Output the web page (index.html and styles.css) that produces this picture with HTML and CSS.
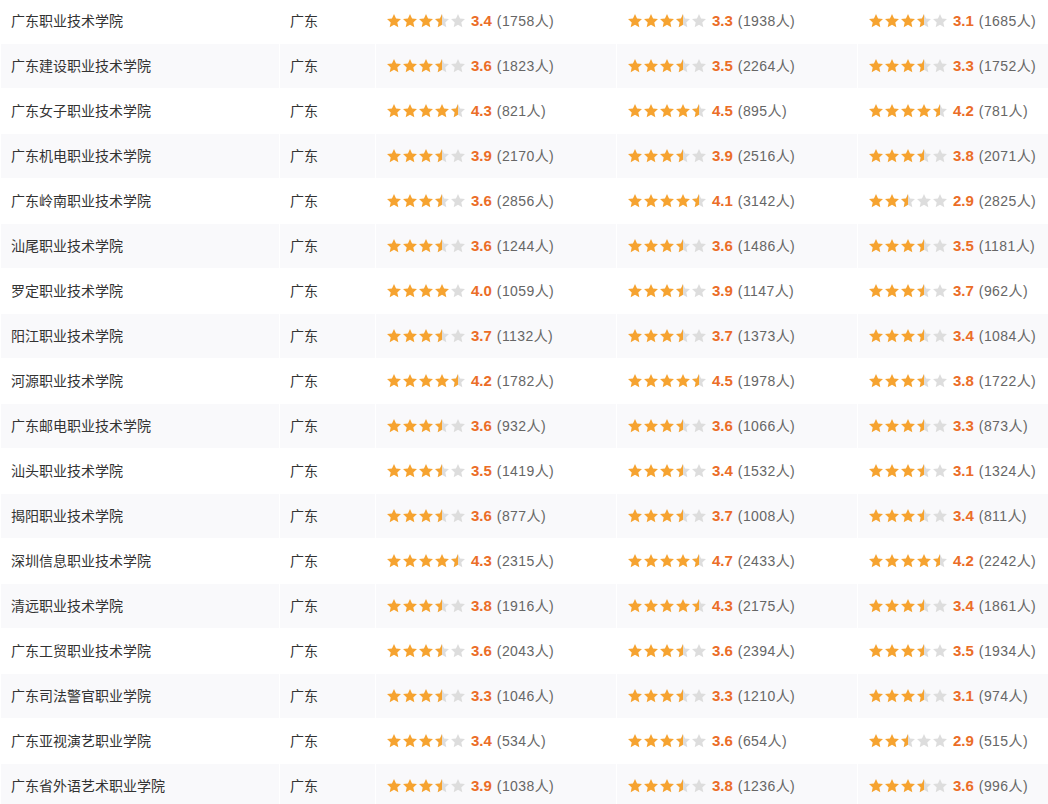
FILE: index.html
```html
<!DOCTYPE html>
<html lang="zh-CN">
<head>
<meta charset="utf-8">
<title>院校评分</title>
<link rel="stylesheet" href="styles.css">
</head>
<body>
<svg class="sprite" aria-hidden="true">
  <symbol id="full" viewBox="0 0 24 24">
    <path class="on" d="M12 1.5L15.06 8.29L22.46 9.1L16.95 14.11L18.47 21.4L12 17.7L5.53 21.4L7.05 14.11L1.54 9.1L8.94 8.29Z"/>
  </symbol>
  <symbol id="half" viewBox="0 0 24 24">
    <path class="off" d="M12 1.5L15.06 8.29L22.46 9.1L16.95 14.11L18.47 21.4L12 17.7L5.53 21.4L7.05 14.11L1.54 9.1L8.94 8.29Z"/>
    <path class="on" d="M12 1.5L8.94 8.29L1.54 9.1L7.05 14.11L5.53 21.4L12 17.7Z"/>
  </symbol>
  <symbol id="empty" viewBox="0 0 24 24">
    <path class="off" d="M12 1.5L15.06 8.29L22.46 9.1L16.95 14.11L18.47 21.4L12 17.7L5.53 21.4L7.05 14.11L1.54 9.1L8.94 8.29Z"/>
  </symbol>
</svg>
<table class="rank">
  <colgroup>
    <col class="c-name"><col class="c-prov"><col class="c-rate"><col class="c-rate"><col class="c-rate">
  </colgroup>
  <tbody>
    <tr>
      <td>广东职业技术学院</td><td>广东</td>
      <td><div class="rate"><span class="stars"><svg><use href="#full"/></svg><svg><use href="#full"/></svg><svg><use href="#full"/></svg><svg><use href="#half"/></svg><svg><use href="#empty"/></svg></span><b>3.4</b><span class="cnt">(1758人)</span></div></td>
      <td><div class="rate"><span class="stars"><svg><use href="#full"/></svg><svg><use href="#full"/></svg><svg><use href="#full"/></svg><svg><use href="#half"/></svg><svg><use href="#empty"/></svg></span><b>3.3</b><span class="cnt">(1938人)</span></div></td>
      <td><div class="rate"><span class="stars"><svg><use href="#full"/></svg><svg><use href="#full"/></svg><svg><use href="#full"/></svg><svg><use href="#half"/></svg><svg><use href="#empty"/></svg></span><b>3.1</b><span class="cnt">(1685人)</span></div></td>
    </tr>
    <tr>
      <td>广东建设职业技术学院</td><td>广东</td>
      <td><div class="rate"><span class="stars"><svg><use href="#full"/></svg><svg><use href="#full"/></svg><svg><use href="#full"/></svg><svg><use href="#half"/></svg><svg><use href="#empty"/></svg></span><b>3.6</b><span class="cnt">(1823人)</span></div></td>
      <td><div class="rate"><span class="stars"><svg><use href="#full"/></svg><svg><use href="#full"/></svg><svg><use href="#full"/></svg><svg><use href="#half"/></svg><svg><use href="#empty"/></svg></span><b>3.5</b><span class="cnt">(2264人)</span></div></td>
      <td><div class="rate"><span class="stars"><svg><use href="#full"/></svg><svg><use href="#full"/></svg><svg><use href="#full"/></svg><svg><use href="#half"/></svg><svg><use href="#empty"/></svg></span><b>3.3</b><span class="cnt">(1752人)</span></div></td>
    </tr>
    <tr>
      <td>广东女子职业技术学院</td><td>广东</td>
      <td><div class="rate"><span class="stars"><svg><use href="#full"/></svg><svg><use href="#full"/></svg><svg><use href="#full"/></svg><svg><use href="#full"/></svg><svg><use href="#half"/></svg></span><b>4.3</b><span class="cnt">(821人)</span></div></td>
      <td><div class="rate"><span class="stars"><svg><use href="#full"/></svg><svg><use href="#full"/></svg><svg><use href="#full"/></svg><svg><use href="#full"/></svg><svg><use href="#half"/></svg></span><b>4.5</b><span class="cnt">(895人)</span></div></td>
      <td><div class="rate"><span class="stars"><svg><use href="#full"/></svg><svg><use href="#full"/></svg><svg><use href="#full"/></svg><svg><use href="#full"/></svg><svg><use href="#half"/></svg></span><b>4.2</b><span class="cnt">(781人)</span></div></td>
    </tr>
    <tr>
      <td>广东机电职业技术学院</td><td>广东</td>
      <td><div class="rate"><span class="stars"><svg><use href="#full"/></svg><svg><use href="#full"/></svg><svg><use href="#full"/></svg><svg><use href="#half"/></svg><svg><use href="#empty"/></svg></span><b>3.9</b><span class="cnt">(2170人)</span></div></td>
      <td><div class="rate"><span class="stars"><svg><use href="#full"/></svg><svg><use href="#full"/></svg><svg><use href="#full"/></svg><svg><use href="#half"/></svg><svg><use href="#empty"/></svg></span><b>3.9</b><span class="cnt">(2516人)</span></div></td>
      <td><div class="rate"><span class="stars"><svg><use href="#full"/></svg><svg><use href="#full"/></svg><svg><use href="#full"/></svg><svg><use href="#half"/></svg><svg><use href="#empty"/></svg></span><b>3.8</b><span class="cnt">(2071人)</span></div></td>
    </tr>
    <tr>
      <td>广东岭南职业技术学院</td><td>广东</td>
      <td><div class="rate"><span class="stars"><svg><use href="#full"/></svg><svg><use href="#full"/></svg><svg><use href="#full"/></svg><svg><use href="#half"/></svg><svg><use href="#empty"/></svg></span><b>3.6</b><span class="cnt">(2856人)</span></div></td>
      <td><div class="rate"><span class="stars"><svg><use href="#full"/></svg><svg><use href="#full"/></svg><svg><use href="#full"/></svg><svg><use href="#full"/></svg><svg><use href="#half"/></svg></span><b>4.1</b><span class="cnt">(3142人)</span></div></td>
      <td><div class="rate"><span class="stars"><svg><use href="#full"/></svg><svg><use href="#full"/></svg><svg><use href="#half"/></svg><svg><use href="#empty"/></svg><svg><use href="#empty"/></svg></span><b>2.9</b><span class="cnt">(2825人)</span></div></td>
    </tr>
    <tr>
      <td>汕尾职业技术学院</td><td>广东</td>
      <td><div class="rate"><span class="stars"><svg><use href="#full"/></svg><svg><use href="#full"/></svg><svg><use href="#full"/></svg><svg><use href="#half"/></svg><svg><use href="#empty"/></svg></span><b>3.6</b><span class="cnt">(1244人)</span></div></td>
      <td><div class="rate"><span class="stars"><svg><use href="#full"/></svg><svg><use href="#full"/></svg><svg><use href="#full"/></svg><svg><use href="#half"/></svg><svg><use href="#empty"/></svg></span><b>3.6</b><span class="cnt">(1486人)</span></div></td>
      <td><div class="rate"><span class="stars"><svg><use href="#full"/></svg><svg><use href="#full"/></svg><svg><use href="#full"/></svg><svg><use href="#half"/></svg><svg><use href="#empty"/></svg></span><b>3.5</b><span class="cnt">(1181人)</span></div></td>
    </tr>
    <tr>
      <td>罗定职业技术学院</td><td>广东</td>
      <td><div class="rate"><span class="stars"><svg><use href="#full"/></svg><svg><use href="#full"/></svg><svg><use href="#full"/></svg><svg><use href="#full"/></svg><svg><use href="#empty"/></svg></span><b>4.0</b><span class="cnt">(1059人)</span></div></td>
      <td><div class="rate"><span class="stars"><svg><use href="#full"/></svg><svg><use href="#full"/></svg><svg><use href="#full"/></svg><svg><use href="#half"/></svg><svg><use href="#empty"/></svg></span><b>3.9</b><span class="cnt">(1147人)</span></div></td>
      <td><div class="rate"><span class="stars"><svg><use href="#full"/></svg><svg><use href="#full"/></svg><svg><use href="#full"/></svg><svg><use href="#half"/></svg><svg><use href="#empty"/></svg></span><b>3.7</b><span class="cnt">(962人)</span></div></td>
    </tr>
    <tr>
      <td>阳江职业技术学院</td><td>广东</td>
      <td><div class="rate"><span class="stars"><svg><use href="#full"/></svg><svg><use href="#full"/></svg><svg><use href="#full"/></svg><svg><use href="#half"/></svg><svg><use href="#empty"/></svg></span><b>3.7</b><span class="cnt">(1132人)</span></div></td>
      <td><div class="rate"><span class="stars"><svg><use href="#full"/></svg><svg><use href="#full"/></svg><svg><use href="#full"/></svg><svg><use href="#half"/></svg><svg><use href="#empty"/></svg></span><b>3.7</b><span class="cnt">(1373人)</span></div></td>
      <td><div class="rate"><span class="stars"><svg><use href="#full"/></svg><svg><use href="#full"/></svg><svg><use href="#full"/></svg><svg><use href="#half"/></svg><svg><use href="#empty"/></svg></span><b>3.4</b><span class="cnt">(1084人)</span></div></td>
    </tr>
    <tr>
      <td>河源职业技术学院</td><td>广东</td>
      <td><div class="rate"><span class="stars"><svg><use href="#full"/></svg><svg><use href="#full"/></svg><svg><use href="#full"/></svg><svg><use href="#full"/></svg><svg><use href="#half"/></svg></span><b>4.2</b><span class="cnt">(1782人)</span></div></td>
      <td><div class="rate"><span class="stars"><svg><use href="#full"/></svg><svg><use href="#full"/></svg><svg><use href="#full"/></svg><svg><use href="#full"/></svg><svg><use href="#half"/></svg></span><b>4.5</b><span class="cnt">(1978人)</span></div></td>
      <td><div class="rate"><span class="stars"><svg><use href="#full"/></svg><svg><use href="#full"/></svg><svg><use href="#full"/></svg><svg><use href="#half"/></svg><svg><use href="#empty"/></svg></span><b>3.8</b><span class="cnt">(1722人)</span></div></td>
    </tr>
    <tr>
      <td>广东邮电职业技术学院</td><td>广东</td>
      <td><div class="rate"><span class="stars"><svg><use href="#full"/></svg><svg><use href="#full"/></svg><svg><use href="#full"/></svg><svg><use href="#half"/></svg><svg><use href="#empty"/></svg></span><b>3.6</b><span class="cnt">(932人)</span></div></td>
      <td><div class="rate"><span class="stars"><svg><use href="#full"/></svg><svg><use href="#full"/></svg><svg><use href="#full"/></svg><svg><use href="#half"/></svg><svg><use href="#empty"/></svg></span><b>3.6</b><span class="cnt">(1066人)</span></div></td>
      <td><div class="rate"><span class="stars"><svg><use href="#full"/></svg><svg><use href="#full"/></svg><svg><use href="#full"/></svg><svg><use href="#half"/></svg><svg><use href="#empty"/></svg></span><b>3.3</b><span class="cnt">(873人)</span></div></td>
    </tr>
    <tr>
      <td>汕头职业技术学院</td><td>广东</td>
      <td><div class="rate"><span class="stars"><svg><use href="#full"/></svg><svg><use href="#full"/></svg><svg><use href="#full"/></svg><svg><use href="#half"/></svg><svg><use href="#empty"/></svg></span><b>3.5</b><span class="cnt">(1419人)</span></div></td>
      <td><div class="rate"><span class="stars"><svg><use href="#full"/></svg><svg><use href="#full"/></svg><svg><use href="#full"/></svg><svg><use href="#half"/></svg><svg><use href="#empty"/></svg></span><b>3.4</b><span class="cnt">(1532人)</span></div></td>
      <td><div class="rate"><span class="stars"><svg><use href="#full"/></svg><svg><use href="#full"/></svg><svg><use href="#full"/></svg><svg><use href="#half"/></svg><svg><use href="#empty"/></svg></span><b>3.1</b><span class="cnt">(1324人)</span></div></td>
    </tr>
    <tr>
      <td>揭阳职业技术学院</td><td>广东</td>
      <td><div class="rate"><span class="stars"><svg><use href="#full"/></svg><svg><use href="#full"/></svg><svg><use href="#full"/></svg><svg><use href="#half"/></svg><svg><use href="#empty"/></svg></span><b>3.6</b><span class="cnt">(877人)</span></div></td>
      <td><div class="rate"><span class="stars"><svg><use href="#full"/></svg><svg><use href="#full"/></svg><svg><use href="#full"/></svg><svg><use href="#half"/></svg><svg><use href="#empty"/></svg></span><b>3.7</b><span class="cnt">(1008人)</span></div></td>
      <td><div class="rate"><span class="stars"><svg><use href="#full"/></svg><svg><use href="#full"/></svg><svg><use href="#full"/></svg><svg><use href="#half"/></svg><svg><use href="#empty"/></svg></span><b>3.4</b><span class="cnt">(811人)</span></div></td>
    </tr>
    <tr>
      <td>深圳信息职业技术学院</td><td>广东</td>
      <td><div class="rate"><span class="stars"><svg><use href="#full"/></svg><svg><use href="#full"/></svg><svg><use href="#full"/></svg><svg><use href="#full"/></svg><svg><use href="#half"/></svg></span><b>4.3</b><span class="cnt">(2315人)</span></div></td>
      <td><div class="rate"><span class="stars"><svg><use href="#full"/></svg><svg><use href="#full"/></svg><svg><use href="#full"/></svg><svg><use href="#full"/></svg><svg><use href="#half"/></svg></span><b>4.7</b><span class="cnt">(2433人)</span></div></td>
      <td><div class="rate"><span class="stars"><svg><use href="#full"/></svg><svg><use href="#full"/></svg><svg><use href="#full"/></svg><svg><use href="#full"/></svg><svg><use href="#half"/></svg></span><b>4.2</b><span class="cnt">(2242人)</span></div></td>
    </tr>
    <tr>
      <td>清远职业技术学院</td><td>广东</td>
      <td><div class="rate"><span class="stars"><svg><use href="#full"/></svg><svg><use href="#full"/></svg><svg><use href="#full"/></svg><svg><use href="#half"/></svg><svg><use href="#empty"/></svg></span><b>3.8</b><span class="cnt">(1916人)</span></div></td>
      <td><div class="rate"><span class="stars"><svg><use href="#full"/></svg><svg><use href="#full"/></svg><svg><use href="#full"/></svg><svg><use href="#full"/></svg><svg><use href="#half"/></svg></span><b>4.3</b><span class="cnt">(2175人)</span></div></td>
      <td><div class="rate"><span class="stars"><svg><use href="#full"/></svg><svg><use href="#full"/></svg><svg><use href="#full"/></svg><svg><use href="#half"/></svg><svg><use href="#empty"/></svg></span><b>3.4</b><span class="cnt">(1861人)</span></div></td>
    </tr>
    <tr>
      <td>广东工贸职业技术学院</td><td>广东</td>
      <td><div class="rate"><span class="stars"><svg><use href="#full"/></svg><svg><use href="#full"/></svg><svg><use href="#full"/></svg><svg><use href="#half"/></svg><svg><use href="#empty"/></svg></span><b>3.6</b><span class="cnt">(2043人)</span></div></td>
      <td><div class="rate"><span class="stars"><svg><use href="#full"/></svg><svg><use href="#full"/></svg><svg><use href="#full"/></svg><svg><use href="#half"/></svg><svg><use href="#empty"/></svg></span><b>3.6</b><span class="cnt">(2394人)</span></div></td>
      <td><div class="rate"><span class="stars"><svg><use href="#full"/></svg><svg><use href="#full"/></svg><svg><use href="#full"/></svg><svg><use href="#half"/></svg><svg><use href="#empty"/></svg></span><b>3.5</b><span class="cnt">(1934人)</span></div></td>
    </tr>
    <tr>
      <td>广东司法警官职业学院</td><td>广东</td>
      <td><div class="rate"><span class="stars"><svg><use href="#full"/></svg><svg><use href="#full"/></svg><svg><use href="#full"/></svg><svg><use href="#half"/></svg><svg><use href="#empty"/></svg></span><b>3.3</b><span class="cnt">(1046人)</span></div></td>
      <td><div class="rate"><span class="stars"><svg><use href="#full"/></svg><svg><use href="#full"/></svg><svg><use href="#full"/></svg><svg><use href="#half"/></svg><svg><use href="#empty"/></svg></span><b>3.3</b><span class="cnt">(1210人)</span></div></td>
      <td><div class="rate"><span class="stars"><svg><use href="#full"/></svg><svg><use href="#full"/></svg><svg><use href="#full"/></svg><svg><use href="#half"/></svg><svg><use href="#empty"/></svg></span><b>3.1</b><span class="cnt">(974人)</span></div></td>
    </tr>
    <tr>
      <td>广东亚视演艺职业学院</td><td>广东</td>
      <td><div class="rate"><span class="stars"><svg><use href="#full"/></svg><svg><use href="#full"/></svg><svg><use href="#full"/></svg><svg><use href="#half"/></svg><svg><use href="#empty"/></svg></span><b>3.4</b><span class="cnt">(534人)</span></div></td>
      <td><div class="rate"><span class="stars"><svg><use href="#full"/></svg><svg><use href="#full"/></svg><svg><use href="#full"/></svg><svg><use href="#half"/></svg><svg><use href="#empty"/></svg></span><b>3.6</b><span class="cnt">(654人)</span></div></td>
      <td><div class="rate"><span class="stars"><svg><use href="#full"/></svg><svg><use href="#full"/></svg><svg><use href="#half"/></svg><svg><use href="#empty"/></svg><svg><use href="#empty"/></svg></span><b>2.9</b><span class="cnt">(515人)</span></div></td>
    </tr>
    <tr>
      <td>广东省外语艺术职业学院</td><td>广东</td>
      <td><div class="rate"><span class="stars"><svg><use href="#full"/></svg><svg><use href="#full"/></svg><svg><use href="#full"/></svg><svg><use href="#half"/></svg><svg><use href="#empty"/></svg></span><b>3.9</b><span class="cnt">(1038人)</span></div></td>
      <td><div class="rate"><span class="stars"><svg><use href="#full"/></svg><svg><use href="#full"/></svg><svg><use href="#full"/></svg><svg><use href="#half"/></svg><svg><use href="#empty"/></svg></span><b>3.8</b><span class="cnt">(1236人)</span></div></td>
      <td><div class="rate"><span class="stars"><svg><use href="#full"/></svg><svg><use href="#full"/></svg><svg><use href="#full"/></svg><svg><use href="#half"/></svg><svg><use href="#empty"/></svg></span><b>3.6</b><span class="cnt">(996人)</span></div></td>
    </tr>
  </tbody>
</table>
</body>
</html>
```
FILE: styles.css
```css
html, body {
  margin: 0;
  padding: 0;
  background: #fff;
  overflow: hidden;
}
body {
  font-family: "Liberation Sans", "Noto Sans CJK SC", sans-serif;
  font-size: 14px;
  color: #333;
}
.sprite {
  position: absolute;
  width: 0;
  height: 0;
  overflow: hidden;
}
.rank {
  border-collapse: separate;
  border-spacing: 1px;
  table-layout: fixed;
  width: 1099px;
  margin-top: -2px;
}
.c-name { width: 278px; }
.c-prov { width: 95px; }
.c-rate { width: 240px; }
.rank td {
  box-sizing: border-box;
  height: 44px;
  padding: 0 10px;
  vertical-align: middle;
  white-space: nowrap;
  line-height: 20px;
}
.rank tr:nth-child(even) td {
  background: #f9f9fb;
}
.rate {
  display: flex;
  align-items: center;
}
.stars {
  display: flex;
  margin-top: -1px;
}
.stars svg {
  width: 16px;
  height: 16px;
  display: block;
}
.on { fill: #f6a330; }
.off { fill: #dddddd; }
.rate b {
  margin-left: 5px;
  font-size: 15px;
  font-weight: bold;
  color: #eb6d27;
}
.rate .cnt {
  margin-left: 5px;
  color: #666;
  letter-spacing: 0.4px;
}
```
